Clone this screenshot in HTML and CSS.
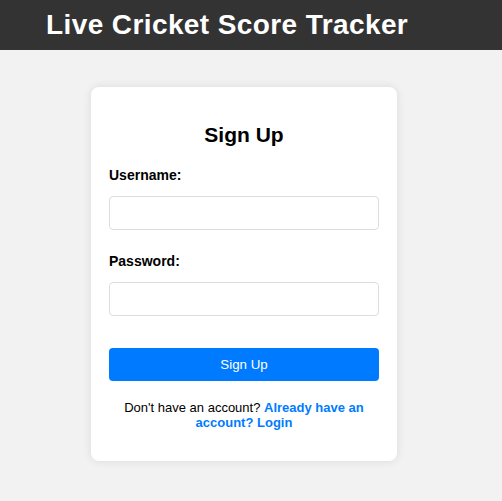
FILE: index.html
```html
<!DOCTYPE html>
<html>
<head>
<meta charset="utf-8">
<link rel="stylesheet" href="styles.css">
</head>
<body>
<header class="topbar">
  <h1 class="title">Live Cricket Score Tracker</h1>
</header>
<main class="page">
  <div class="card">
    <h2 class="card-title">Sign Up</h2>
    <form class="form">
      <label class="label" for="u">Username:</label>
      <input class="input" id="u" type="text">
      <label class="label label-second" for="p">Password:</label>
      <input class="input" id="p" type="password">
      <button class="btn" type="button">Sign Up</button>
    </form>
    <p class="footer-text">Don't have an account? <a class="link" href="#">Already have an account? Login</a></p>
  </div>
</main>
</body>
</html>
```
FILE: styles.css
```css
html, body {
  margin: 0;
  padding: 0;
}
body {
  background: #f2f2f2;
  font-family: "Liberation Sans", Arial, sans-serif;
  color: #000;
}
.topbar {
  background: #333333;
  height: 50px;
  display: flex;
  align-items: center;
  padding-left: 46px;
}
.title {
  margin: 0;
  color: #fff;
  font-size: 28px;
  letter-spacing: 0.4px;
  font-weight: bold;
  line-height: 32px;
}
.page {
  padding-top: 37px;
  padding-bottom: 20px;
}
.card {
  width: 270px;
  margin-left: 91px;
  padding: 18px 18px 18px;
  background: #fff;
  border-radius: 8px;
  box-shadow: 0 0 10px rgba(0, 0, 0, 0.1);
}
.card-title {
  margin: 18px 0 20px;
  font-size: 21px;
  line-height: 24px;
  text-align: center;
}
.form {
  display: flex;
  flex-direction: column;
}
.label {
  font-size: 14px;
  line-height: 16px;
  font-weight: bold;
  margin-bottom: 13px;
}
.label-second {
  margin-top: 23px;
}
.input {
  box-sizing: border-box;
  width: 270px;
  height: 34px;
  border: 1px solid #ddd;
  border-radius: 4px;
  padding: 8px;
  font-size: 14px;
  margin: 0;
}
.btn {
  margin-top: 32px;
  height: 33px;
  width: 270px;
  border: none;
  border-radius: 4px;
  background: #007bff;
  color: #fff;
  font-family: "Liberation Sans", Arial, sans-serif;
  font-size: 13.33px;
  cursor: pointer;
}
.footer-text {
  margin: 19px 0 13px;
  text-align: center;
  font-size: 13px;
  line-height: 15px;
}
.link {
  color: #007bff;
  font-weight: bold;
  text-decoration: none;
}
```
